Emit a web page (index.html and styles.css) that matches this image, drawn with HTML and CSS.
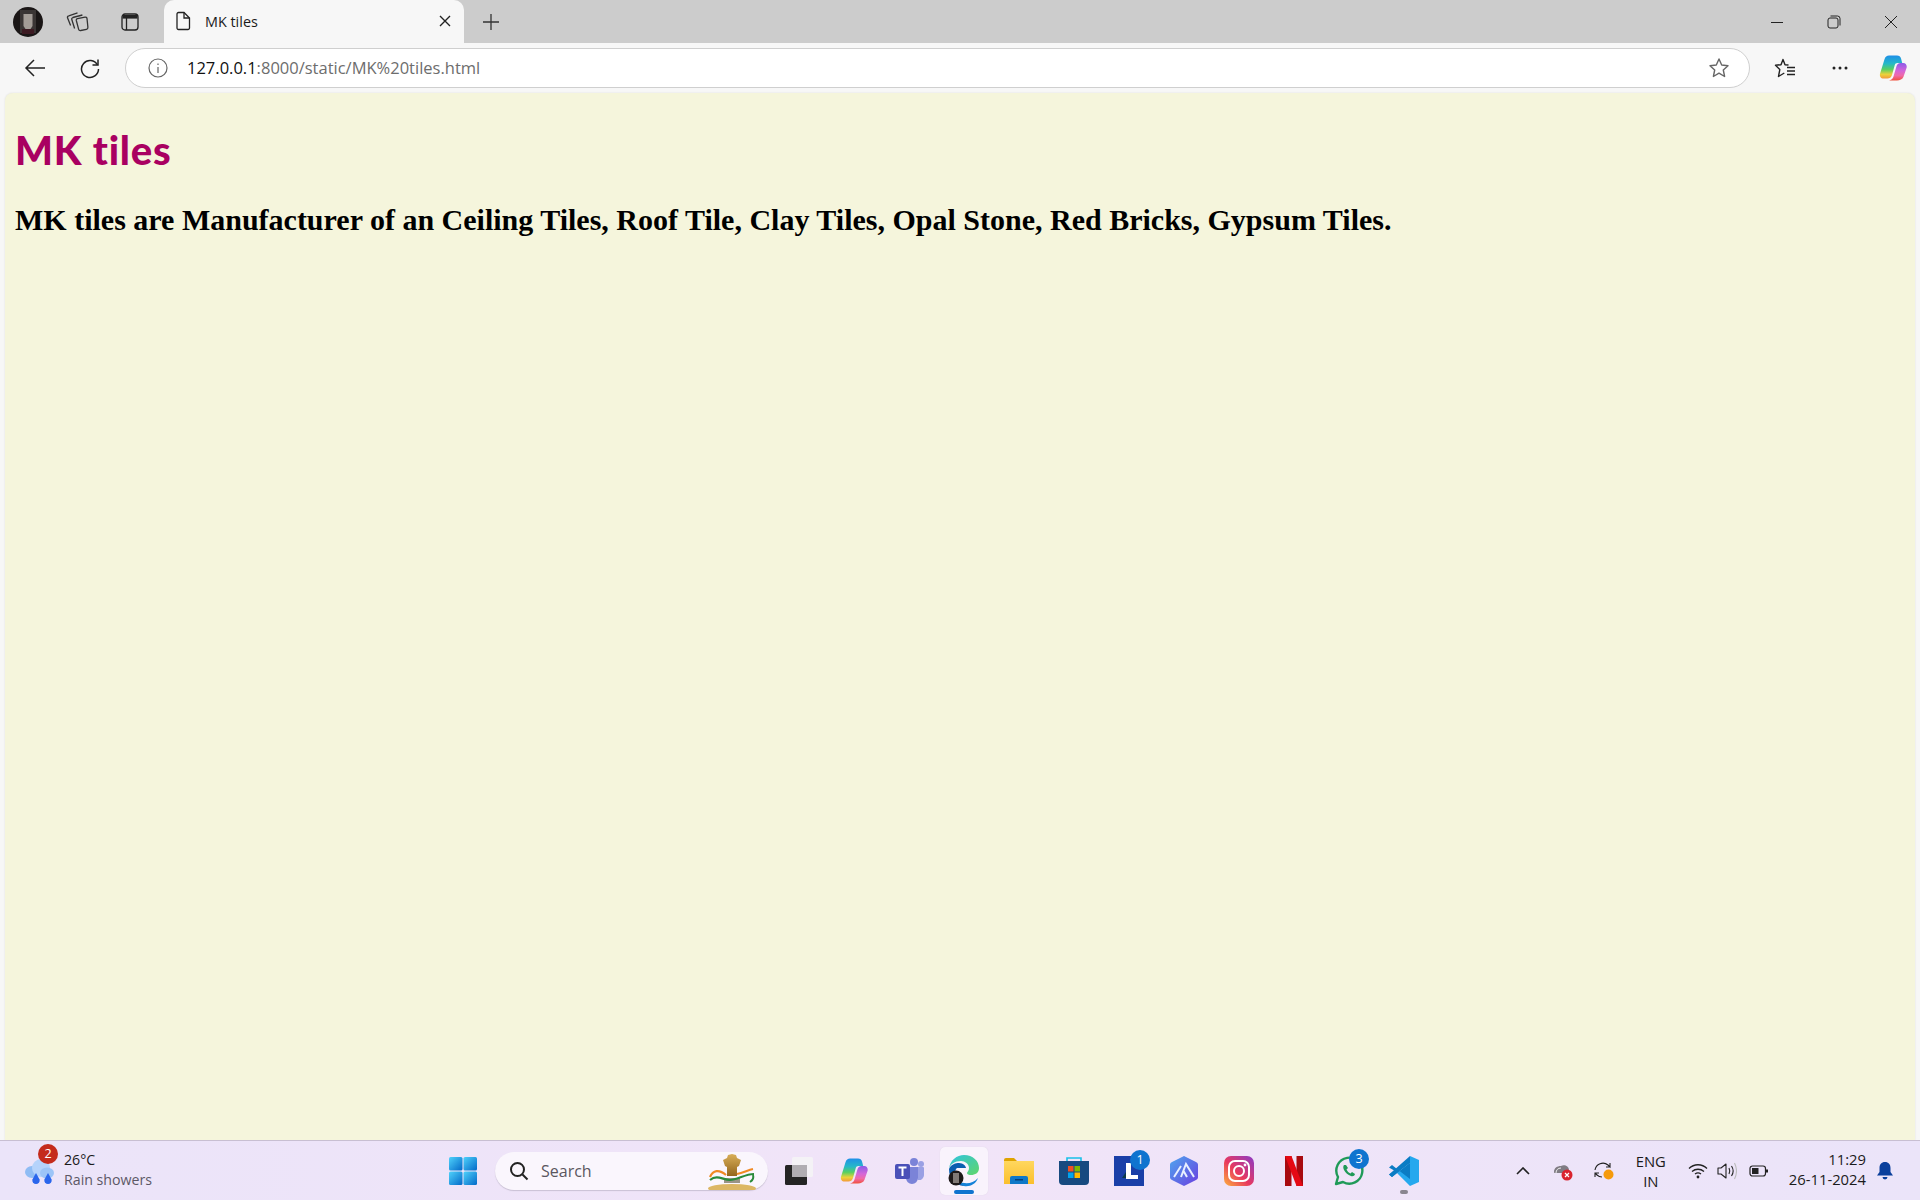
FILE: index.html
```html
<!DOCTYPE html>
<html lang="en">
<head>
<meta charset="utf-8">
<title>MK tiles</title>
<link rel="stylesheet" href="styles.css">
</head>
<body>
<svg class="defs" width="0" height="0" aria-hidden="true">
  <defs>
    <linearGradient id="cpL" x1="0" y1="0" x2="0" y2="1"><stop offset="0" stop-color="#1f8fe8"/><stop offset=".35" stop-color="#25b8c8"/><stop offset=".6" stop-color="#58cf62"/><stop offset=".82" stop-color="#ecd23a"/><stop offset="1" stop-color="#f29a3a"/></linearGradient>
    <linearGradient id="cpR" x1="0" y1="0" x2="0" y2="1"><stop offset="0" stop-color="#8a5ce8"/><stop offset=".45" stop-color="#d566d8"/><stop offset=".72" stop-color="#f06aa8"/><stop offset="1" stop-color="#f0503c"/></linearGradient>
    <linearGradient id="win" x1="0" y1="0" x2="1" y2="1"><stop offset="0" stop-color="#4fd2fb"/><stop offset="1" stop-color="#0369c8"/></linearGradient>
    <linearGradient id="edge" x1="0" y1="0" x2="1" y2="1"><stop offset="0" stop-color="#2fc4e0"/><stop offset="1" stop-color="#5fd66a"/></linearGradient>
    <linearGradient id="insta" x1="0" y1="1" x2="1" y2="0"><stop offset="0" stop-color="#fdb03c"/><stop offset=".45" stop-color="#e8385f"/><stop offset="1" stop-color="#8a3ac8"/></linearGradient>
    <linearGradient id="folder" x1="0" y1="0" x2="0" y2="1"><stop offset="0" stop-color="#ffd75e"/><stop offset="1" stop-color="#fbbf2d"/></linearGradient>
    <linearGradient id="apert" x1="0" y1="0" x2="1" y2="1"><stop offset="0" stop-color="#4fa6ee"/><stop offset="1" stop-color="#6a3fe0"/></linearGradient>
    <linearGradient id="gold" x1="0" y1="0" x2="0" y2="1"><stop offset="0" stop-color="#d8ae58"/><stop offset="1" stop-color="#94661c"/></linearGradient>
    <symbol id="copilot" viewBox="0 0 28 28">
      <path d="M10 1.500h8c2.200 0 3.500 1.200 4.100 3.200L23.200 9H18.500c-1.500 0-2.400.8-2.800 2.300L13 21c-.7 2.400-2.400 3.500-4.500 3.500H4.500C1.800 24.500.3 22 1.100 19.400L5.500 5.200C6.300 2.800 7.800 1.500 10 1.500z" fill="url(#cpL)"/>
      <path d="M18 26.500h-8c2.200-.2 3.700-1.600 4.400-3.700l3-10.300c.6-2 2-3.500 4.100-3.500h2.700c2.500 0 4 2.400 3.400 4.800l-3.100 9c-.9 2.500-3.800 3.700-6.500 3.700z" fill="url(#cpR)"/>
    </symbol>
  </defs>
</svg>

<header class="tabstrip">
  <span class="avatar">
    <svg width="30" height="30" viewBox="0 0 30 30"><circle cx="15" cy="15" r="15" fill="#1a1616"/><rect x="7" y="3" width="16" height="23" fill="#3a3534"/><path d="M10.500 7h9v12l-2 3h-5l-2-3z" fill="#a39c96"/><path d="M9 22h12v5H9z" fill="#3c1a22"/></svg>
  </span>
  <button class="strip-btn strip-btn-first" aria-label="Collections">
    <svg width="24" height="22" viewBox="0 0 24 22" fill="none" stroke="#333" stroke-width="1.300" stroke-linejoin="round"><path d="M11.500 7.700l7.500-1.600c1.100-.2 1.900.4 2 1.400l.9 8.800c.1 1.100-.4 1.800-1.400 2l-5.800 1.200c-1.100.2-1.800-.3-2.100-1.300l-2.300-8.700c-.2-.9.300-1.600 1.200-1.800z"/><path d="M6.800 6.500l9.600-2.500"/><path d="M7 6.500c-1 .3-1.500 1-1.200 2l2.800 9"/><path d="M2.700 4.800l8.800-2.900"/><path d="M2.700 4.800c-1 .4-1.500 1.200-1.100 2.200l3 7.500"/></svg>
  </button>
  <button class="strip-btn" aria-label="Vertical tabs">
    <svg width="20" height="20" viewBox="0 0 20 20" fill="none" stroke="#222" stroke-width="1.300"><rect x="2" y="2" width="16" height="16" rx="3"/><path d="M2.500 4.800h15" stroke-width="3.600"/><path d="M6.500 6v12"/></svg>
  </button>
  <div class="tab">
    <svg class="tab-doc" width="18" height="20" viewBox="0 0 18 20" fill="none" stroke="#222" stroke-width="1.300"><path d="M3 3a1.500 1.500 0 0 1 1.500-1.500H10L15.500 7v10a1.500 1.500 0 0 1-1.500 1.500H4.500A1.500 1.500 0 0 1 3 17z"/><path d="M10 1.500V7h5.500"/></svg>
    <span class="tab-title">MK tiles</span>
    <svg class="tab-close" width="12" height="12" viewBox="0 0 12 12" stroke="#222" stroke-width="1.400"><path d="M1 1l10 10M11 1L1 11"/></svg>
  </div>
  <button class="strip-btn strip-btn-new" aria-label="New tab">
    <svg width="18" height="18" viewBox="0 0 18 18" stroke="#333" stroke-width="1.300"><path d="M9 1v16M1 9h16"/></svg>
  </button>
  <div class="winctl">
    <button class="win-btn" aria-label="Minimise"><svg width="14" height="14" viewBox="0 0 14 14" stroke="#222" stroke-width="1"><path d="M1 7.500h12"/></svg></button>
    <button class="win-btn" aria-label="Restore"><svg width="14" height="14" viewBox="0 0 14 14" fill="none" stroke="#222" stroke-width="1"><rect x="1" y="3" width="10" height="10" rx="2"/><path d="M3.500 1h7A2.500 2.500 0 0 1 13 3.500v7"/></svg></button>
    <button class="win-btn" aria-label="Close"><svg width="14" height="14" viewBox="0 0 14 14" stroke="#222" stroke-width="1"><path d="M1 1l12 12M13 1L1 13"/></svg></button>
  </div>
</header>

<nav class="toolbar">
  <button class="tool-btn tool-back" aria-label="Back">
    <svg width="22" height="20" viewBox="0 0 22 20" fill="none" stroke="#222" stroke-width="1.500"><path d="M21 10H2M10 2l-8 8 8 8"/></svg>
  </button>
  <button class="tool-btn tool-reload" aria-label="Refresh">
    <svg width="22" height="22" viewBox="0 0 22 22" fill="none" stroke="#222" stroke-width="1.500"><path d="M18.500 8A8.500 8.500 0 1 0 19.500 12"/><path d="M19 2.500V8h-5.500"/></svg>
  </button>
  <div class="address">
    <svg class="addr-info" width="20" height="20" viewBox="0 0 20 20" fill="none" stroke="#666" stroke-width="1.200"><circle cx="10" cy="10" r="9"/><path d="M10 9v6"/><path d="M10 5.500v1.500"/></svg>
    <span class="url"><span class="url-host">127.0.0.1</span>:8000/static/MK%20tiles.html</span>
    <svg class="addr-star" width="22" height="22" viewBox="0 0 22 22" fill="none" stroke="#666" stroke-width="1.400"><path d="M11 2l2.700 6 6.300.7-4.700 4.300 1.300 6.500L11 16.200l-5.600 3.300 1.300-6.500L2 8.700 8.300 8z" stroke-linejoin="round"/></svg>
  </div>
  <button class="tool-btn tool-fav" aria-label="Favourites">
    <svg width="22" height="22" viewBox="0 0 22 22" fill="none" stroke="#222" stroke-width="1.400"><path d="M14.500 8L11 7.800 9 2.500 7 7.700l-5.500.6 4.300 4.300L4.500 19.500l5.800-3.500" stroke-linejoin="round"/><path d="M13 10.500h8M13 14h8M13 17.500h8"/></svg>
  </button>
  <button class="tool-btn tool-more" aria-label="More">
    <svg width="16" height="4" viewBox="0 0 16 4" fill="#222"><circle cx="2" cy="2" r="1.500"/><circle cx="8" cy="2" r="1.500"/><circle cx="14" cy="2" r="1.500"/></svg>
  </button>
  <button class="tool-btn tool-copilot" aria-label="Copilot">
    <svg width="28" height="28"><use href="#copilot"/></svg>
  </button>
</nav>

<main class="page">
  <h1 class="title">MK tiles</h1>
  <h2 class="lead">MK tiles are Manufacturer of an Ceiling Tiles, Roof Tile, Clay Tiles, Opal Stone, Red Bricks, Gypsum Tiles.</h2>
</main>

<footer class="taskbar">
  <div class="weather">
    <span class="weather-icon">
      <svg width="34" height="34" viewBox="0 0 34 34"><ellipse cx="9" cy="16" rx="7" ry="6" fill="#8fbcf4"/><circle cx="18" cy="12" r="9" fill="#b5d3fb"/><ellipse cx="24" cy="17" rx="7" ry="5.500" fill="#9cc4f7"/><path d="M13 17l3.600 6.500a3.700 3.700 0 1 1-7.200 0z" fill="#2a66ec"/><path d="M25 17l3.600 6.500a3.700 3.700 0 1 1-7.200 0z" fill="#2a66ec"/></svg>
      <span class="weather-badge">2</span>
    </span>
    <span class="weather-text"><span class="w-temp">26°C</span><span class="w-desc">Rain showers</span></span>
  </div>

  <div class="apps">
    <span class="app"><svg width="30" height="30" viewBox="0 0 30 30" fill="url(#win)"><rect x="1" y="1" width="13.500" height="13.500" rx="1.500"/><rect x="15.500" y="1" width="13.500" height="13.500" rx="1.500"/><rect x="1" y="15.500" width="13.500" height="13.500" rx="1.500"/><rect x="15.500" y="15.500" width="13.500" height="13.500" rx="1.500"/></svg></span>
    <div class="search">
      <svg width="20" height="20" viewBox="0 0 20 20" fill="none" stroke="#222" stroke-width="2"><circle cx="8.500" cy="8.500" r="6.500"/><path d="M13.500 13.500l5 5"/></svg>
      <span class="search-label">Search</span>
      <svg class="emblem" width="48" height="38" viewBox="0 0 48 38">
        <ellipse cx="24" cy="36.500" rx="24" ry="4.500" fill="#dcb765"/>
        <path d="M20 3l4-1 4 1 1 3 4 2-2 6-2 1v9H19v-9l-2-1-2-6 4-2z" fill="url(#gold)"/>
        <rect x="16" y="26" width="16" height="5" fill="#9a9486"/>
        <path d="M2 25c3-7 9-8 16-2" fill="none" stroke="#f08a24" stroke-width="2.200"/>
        <path d="M29 22c6-1 11-4 16-5" fill="none" stroke="#f08a24" stroke-width="2.200"/>
        <path d="M2 28c7-6 13 0 20 0s15-6 24-6" fill="none" stroke="#2a8a3a" stroke-width="2.200"/>
        <path d="M45 23c1 3 0 5-3 7" fill="none" stroke="#2a8a3a" stroke-width="2"/>
      </svg>
    </div>
    <span class="app app-task"><svg width="30" height="30" viewBox="0 0 30 30"><rect x="1" y="9" width="22" height="20" rx="1.500" fill="#242424"/><rect x="8" y="1" width="21" height="20" rx="1.500" fill="#f4f2f6"/><rect x="8" y="9" width="15" height="12" fill="#b0adb2"/></svg></span>
    <span class="app"><svg width="28" height="28"><use href="#copilot"/></svg></span>
    <span class="app"><svg width="30" height="28" viewBox="0 0 30 28"><circle cx="20" cy="5" r="4" fill="#7b83d8"/><circle cx="27" cy="7" r="3" fill="#9aa0e4"/><path d="M22 10h7a1 1 0 0 1 1 1v7a5 5 0 0 1-6 5z" fill="#9aa0e4"/><path d="M11 10h13v11a6 6 0 0 1-12 0z" fill="#7b83d8"/><rect x="1" y="7" width="15" height="15" rx="2" fill="#4a50b8"/><path d="M4.500 10.500h8M8.500 10.500V19" stroke="#fff" stroke-width="2" fill="none"/></svg></span>
    <span class="app app-active">
      <svg width="32" height="32" viewBox="0 0 32 32">
        <path d="M1 14C2 5 9 0 16 0c9 0 15 6 15 13 0 5-4 7-8 7-2 0-4-.5-4-2 0-1 2-2 2-5 0-4-4-7-8-7-6 0-11 3-12 8z" fill="url(#edge)"/>
        <path d="M1 14c2-5 7-6 10-6 4 0 7 3 7 5H9c-3 2-2 9 2 13 2 2 5 4 5 5C7 30 1 24 1 14z" fill="#0a5fb0"/>
        <path d="M11 26c4 3 13 4 19-3-2 6-8 9-14 8-2 0-4-3-5-5z" fill="#1582d8"/>
        <circle cx="8" cy="23" r="7.500" fill="#1e1a1a"/><rect x="5" y="18" width="6" height="10" fill="#807a76"/>
      </svg>
      <span class="active-bar"></span>
    </span>
    <span class="app"><svg width="30" height="28" viewBox="0 0 30 28"><path d="M0 3a2 2 0 0 1 2-2h8l3 3h-13z" fill="#dfa300"/><rect y="4" width="30" height="23" fill="url(#folder)"/><path d="M8 19h14a2 2 0 0 1 2 2v6H6v-6a2 2 0 0 1 2-2z" fill="#0f78c8"/><rect x="11" y="22" width="8" height="1.500" fill="#073f78"/></svg></span>
    <span class="app"><svg width="30" height="30" viewBox="0 0 30 30"><path d="M8 5V2h14v3" fill="none" stroke="#18c0e8" stroke-width="1.600"/><path d="M0 5h30v20a4 4 0 0 1-4 4H4a4 4 0 0 1-4-4z" fill="#174a80"/><rect x="9" y="10" width="5.500" height="5.500" fill="#f25022"/><rect x="15.500" y="10" width="5.500" height="5.500" fill="#7fba00"/><rect x="9" y="16.500" width="5.500" height="5.500" fill="#00a4ef"/><rect x="15.500" y="16.500" width="5.500" height="5.500" fill="#ffb900"/></svg></span>
    <span class="app">
      <svg width="30" height="30" viewBox="0 0 30 30"><rect width="30" height="30" fill="#1a3fa8"/><path d="M8 22l4-6v6z" fill="#0b3a4a"/><path d="M12 7h5v12h7v4H12z" fill="#fff"/></svg>
      <span class="badge">1</span>
    </span>
    <span class="app"><svg width="28" height="30" viewBox="0 0 28 30"><path d="M14 0l12 6a3 3 0 0 1 2 3v12a3 3 0 0 1-2 3l-12 6-12-6a3 3 0 0 1-2-3V9a3 3 0 0 1 2-3z" fill="url(#apert)"/><path d="M4 21l7-11M11 21l5-13 8 13M13 14l4 7" fill="none" stroke="#e8f0ff" stroke-width="2"/></svg></span>
    <span class="app"><svg width="30" height="30" viewBox="0 0 30 30"><rect width="30" height="30" rx="7" fill="url(#insta)"/><rect x="5" y="5" width="20" height="20" rx="6" fill="none" stroke="#fff" stroke-width="2"/><circle cx="15" cy="15" r="5" fill="none" stroke="#fff" stroke-width="2"/><circle cx="21" cy="9" r="1.400" fill="#fff"/></svg></span>
    <span class="app"><svg width="18" height="30" viewBox="0 0 18 30"><path d="M0 0h6.500v30L0 30z" fill="#a80a10"/><path d="M11.500 0H18v30h-6.500z" fill="#a80a10"/><path d="M0 0h6.500l11.500 30h-6.500z" fill="#e50914"/></svg></span>
    <span class="app">
      <svg width="30" height="30" viewBox="0 0 30 30" fill="none"><path d="M2 28l2-7A13 13 0 1 1 9 26z" stroke="#1f9a58" stroke-width="2.400" stroke-linejoin="round"/><path d="M10 9c-1 1-1 3 0 5 1.500 3 4 5 7 6 2 .5 3.500 0 4-2l-3-2-1.500 1.500c-2-1-3-2-4-4l1.500-1.500-2-3z" fill="#1f9a58"/></svg>
      <span class="badge badge-wa">3</span>
    </span>
    <span class="app">
      <svg width="30" height="30" viewBox="0 0 30 30"><path d="M21 0l9 4v22l-9 4L8 17l13-10z" fill="#25a8ee" /><path d="M21 7v16L8 13 3 9 0 11.500 6 15l-6 3.500L3 21l5-4z" fill="#0b7cc4"/><path d="M21 0v7L8 17l-5 4-3-2.500z" fill="#0b7cc4"/></svg>
      <span class="open-bar"></span>
    </span>
  </div>

  <div class="tray">
    <svg class="tray-chevron" width="14" height="8" viewBox="0 0 14 8" fill="none" stroke="#222" stroke-width="1.600"><path d="M1 7l6-6 6 6"/></svg>
    <span class="tray-cloud"><svg width="22" height="20" viewBox="0 0 22 20"><path d="M2 11c0-4 3-6 7-6 3-2 8 0 8 4v3H4c-1.500 0-2 0-2-1z" fill="#807c84"/><path d="M4 12c0-3 2-5 5-5" stroke="#eee" fill="none"/><circle cx="15" cy="14" r="5.500" fill="#d9232e"/><path d="M13 12l4 4M17 12l-4 4" stroke="#fff" stroke-width="1.200"/></svg></span>
    <span class="tray-sync"><svg width="22" height="20" viewBox="0 0 22 20" fill="none" stroke="#222" stroke-width="1.100"><path d="M2 9a8 8 0 0 1 13-5l2 2V2M17 6h-4M2 16v-4h4M2 12l2 2c1 1 3 2 5 2"/><circle cx="15.500" cy="13.500" r="5" fill="#f59a0c" stroke="none"/></svg></span>
    <span class="tray-lang"><span>ENG</span><span>IN</span></span>
    <svg class="tray-wifi" width="20" height="16" viewBox="0 0 20 16" fill="none" stroke="#222" stroke-width="1.300"><path d="M1 5.500c5-5 13-5 18 0M4 8.500c3.500-3 8.500-3 12 0M7 11c2-1.500 4-1.500 6 0"/><circle cx="10" cy="14" r="1.400" fill="#222" stroke="none"/></svg>
    <svg class="tray-vol" width="20" height="18" viewBox="0 0 20 18" fill="none" stroke="#222" stroke-width="1.100"><path d="M1 6v6h3l5 4V2L4 6z" stroke-linejoin="round"/><path d="M12 6c1 2 1 4 0 6M14.500 4c2 3 2 7 0 10"/><path d="M17.500 1c2.500 5 2.500 11 0 16" stroke="#bbb"/></svg>
    <svg class="tray-bat" width="20" height="14" viewBox="0 0 20 14" fill="none" stroke="#222" stroke-width="1.200"><rect x="1" y="2" width="15.500" height="10" rx="2.500"/><rect x="3" y="4" width="6.500" height="6" fill="#222" stroke="none"/><path d="M18 5.500v3" stroke-width="2"/></svg>
    <span class="tray-clock"><span>11:29</span><span>26-11-2024</span></span>
    <svg class="tray-bell" width="18" height="20" viewBox="0 0 18 20" fill="#0a3f9c"><path d="M9 1c3.500 0 5.500 2.500 5.500 6v4l2.500 3.500H1L3.500 11V7C3.500 3.500 5.500 1 9 1z"/><path d="M6.500 16h5a2.500 2.500 0 0 1-5 0z"/></svg>
  </div>
</footer>
</body>
</html>
```
FILE: styles.css
```css
* { box-sizing: border-box; }
html, body { height: 100%; }
body {
  margin: 0;
  height: 1200px;
  display: flex;
  flex-direction: column;
  overflow: hidden;
  background: #f7f7f7;
  font-family: "Open Sans", "Noto Sans", sans-serif;
  color: #1b1b1b;
}
button { border: 0; background: none; padding: 0; display: flex; align-items: center; justify-content: center; }
.defs { position: absolute; }

.tabstrip {
  height: 43px;
  flex: none;
  display: flex;
  align-items: center;
  background: #cccccc;
  padding-left: 13px;
}
.avatar { width: 30px; height: 30px; display: block; }
.avatar svg { display: block; }
.strip-btn { width: 52px; height: 36px; }
.strip-btn-first { margin-left: 9px; }
.tab {
  align-self: stretch;
  width: 300px;
  margin-left: 8px;
  display: flex;
  align-items: center;
  padding: 0 13px 1px 10px;
  background: #f7f7f7;
  border-radius: 10px 10px 0 0;
}
.tab-title { font-size: 14.4px; margin-left: 13px; flex: 1; }
.strip-btn-new { width: 54px; }
.winctl { margin-left: auto; display: flex; }
.win-btn { width: 57px; height: 36px; }
.win-btn:last-child { width: 58px; }

.toolbar {
  height: 50px;
  flex: none;
  display: flex;
  align-items: center;
  background: #f7f7f7;
  padding-bottom: 1px;
}
.tool-btn { height: 40px; width: 55px; flex: none; }
.tool-back { margin-left: 7px; }
.tool-reload { margin-right: 8px; }
.address {
  width: 1625px;
  height: 40px;
  flex: none;
  display: flex;
  align-items: center;
  padding: 0 19px 0 22px;
  background: #fff;
  border: 1.500px solid #cfcfcf;
  border-radius: 20px;
}
.url { flex: 1; margin-left: 19px; font-size: 16.5px; color: #6d6d6d; white-space: nowrap; }
.url-host { color: #111; }
.tool-fav { margin-left: 7px; }
.tool-more { width: 55px; }
.tool-copilot { width: 52px; }

.page {
  flex: 1;
  margin: 0 5px;
  padding: 1px 10px;
  background: #f5f5dc;
  border-radius: 8px 8px 0 0;
  box-shadow: 0 0 2px #dcdcdc;
  font-family: "Liberation Serif", "Times New Roman", serif;
  color: #000;
}
.title {
  margin: 29px 0 0;
  font-family: "Comic Sans MS", "Lato", "Open Sans", sans-serif;
  font-size: 40px;
  line-height: 54px;
  font-weight: 900;
  letter-spacing: 0.800px;
  color: #a90061;
}
.lead {
  margin: 25px 0 0;
  font-size: 30px;
  line-height: 35px;
  font-weight: 700;
}

.taskbar {
  height: 60px;
  flex: none;
  display: flex;
  align-items: center;
  background: linear-gradient(90deg, #ebe4f9, #f1e4f8 50%, #ebe4f9);
  border-top: 1px solid #c8bfd2;
}
.weather { width: 435px; flex: none; display: flex; align-items: center; padding-left: 23px; }
.weather-icon { position: relative; width: 34px; height: 34px; margin-top: 4px; }
.weather-icon svg { display: block; }
.weather-badge {
  position: absolute; left: 15px; top: -12px;
  width: 20px; height: 20px; border-radius: 50%;
  background: #c42b1c; color: #fff;
  font-size: 12.5px; line-height: 20px; text-align: center;
}
.weather-text { display: flex; flex-direction: column; margin: -2px 0 0 7px; line-height: 20px; font-size: 14.200px; }
.w-desc { color: #5c5866; }

.apps { display: flex; align-items: center; height: 100%; }
.app {
  position: relative;
  width: 55px; height: 48px;
  display: flex; align-items: center; justify-content: center;
  flex: none;
}
.app-active {
  width: 48px;
  margin: 0 3.500px;
  background: #f9f3fc;
  border-radius: 5px;
  box-shadow: 0 0 1px #d8cfe0;
}
.active-bar {
  position: absolute; bottom: 1px; left: 14px;
  width: 20px; height: 3.500px; border-radius: 2px; background: #0f74cf;
}
.open-bar {
  position: absolute; bottom: 1px; left: 24px;
  width: 8px; height: 3.500px; border-radius: 2px; background: #8a8690;
}
.badge {
  position: absolute; left: 29px; top: 3px;
  width: 20px; height: 20px; border-radius: 50%;
  background: #0f74cf; color: #fff;
  font-size: 12.5px; line-height: 20px; text-align: center;
}
.badge-wa { left: 28px; top: 2px; }
.search {
  width: 273px; height: 38px;
  margin: 0 3px 0 5px;
  display: flex; align-items: center;
  padding-left: 14px;
  background: #faf6fd;
  border-radius: 19px;
  box-shadow: 0 1px 1px #c9c0d4;
  position: relative;
}
.search-label { margin-left: 12px; font-size: 16px; color: #5a5660; }
.emblem { position: absolute; right: 12px; top: 0; }

.tray { margin-left: auto; display: flex; align-items: center; height: 100%; font-size: 14.800px; flex: none; }
.tray-chevron { margin-right: 22px; }
.tray-cloud { display: flex; margin-right: 19px; }
.tray-sync { display: flex; margin-right: 16px; }
.tray-lang { display: flex; flex-direction: column; align-items: center; line-height: 20px; width: 40px; margin-right: 17px; }
.tray-wifi { margin-right: 9px; }
.tray-vol { margin-right: 12px; }
.tray-bat { margin-right: 20px; }
.tray-clock { display: flex; flex-direction: column; align-items: flex-end; line-height: 20px; margin-top: -3px; margin-right: 10px; }
.tray-bell { margin-right: 26px; }
```
